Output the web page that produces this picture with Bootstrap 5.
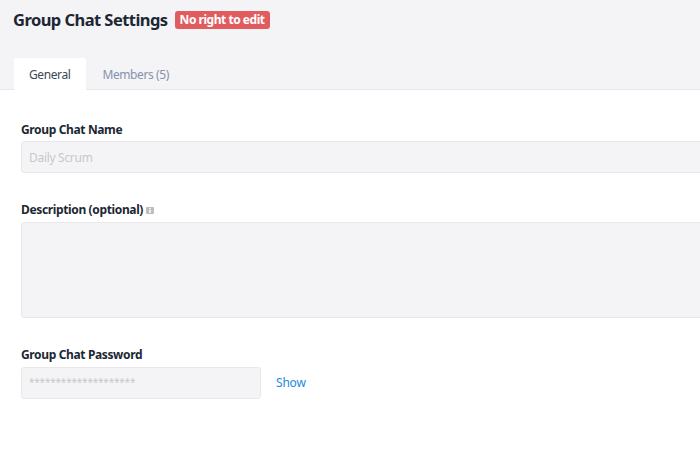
<!DOCTYPE html>
<html lang="en">
<head>
<meta charset="utf-8">
<title>Group Chat Settings</title>
<link href="https://cdn.jsdelivr.net/npm/bootstrap@5.3.0/dist/css/bootstrap.min.css" rel="stylesheet">
<style>
html, body { height: 100%; }
body { font-family: "Noto Sans", "Open Sans", sans-serif; font-size: 12px; color: #1c2733; background: #fff; overflow: hidden; width: 700px; }
.head-zone { background: #f4f4f7; height: 90px; padding: 8px 0 0 13px; display: flex; flex-direction: column; justify-content: space-between; border-bottom: 1px solid #e6e6e8; }
.page-title { font-size: 16.5px; font-weight: 700; margin: 0; color: #1c2733; line-height: 24px; letter-spacing: -0.55px; }
.edit-flag { background: #e05c5f; color: #fff; font-size: 12px; font-weight: 700; border-radius: 3px; padding: 0 5px; line-height: 18px; letter-spacing: -0.47px; margin-left: -1px; }
.head-zone .nav-tabs { border-bottom: 0; margin-bottom: -1px; gap: 1px; margin-left: 1px; }
.head-zone .nav-link { border: 0; margin-bottom: 0; border-radius: 3px 3px 0 0; padding: 0 15px; line-height: 34px; height: 32px; font-size: 12px; color: #8492ab; letter-spacing: -0.4px; }
.head-zone .nav-link.active { color: #3d4854; background: #fff; padding-right: 16px; }
.form-zone { padding: 31px 0 0 21px; width: 760px; }
.field-block { margin-bottom: 28px; }
.field-name { display: block; font-weight: 700; font-size: 12px; line-height: 18px; margin-bottom: 3px; letter-spacing: -0.36px; color: #1c2733; }
.field-block:first-child .field-name { margin-bottom: 2px; }
.form-zone .form-control { background: #f4f4f7; border: 1px solid #e8e8ea; border-radius: 3px; color: #c8c8c8; font-size: 12px; padding: 0 7px; height: 32px; letter-spacing: -0.3px; box-shadow: none; opacity: 1; }
.form-zone textarea.form-control { height: 96px; resize: none; }
.form-zone .pass-box { width: 240px; flex: none; font-size: 10px; letter-spacing: -0.2px; padding-bottom: 3px; }
.show-link { color: #1a8ae0; font-size: 12px; text-decoration: none; letter-spacing: -0.2px; margin-left: -1px; }
.info-mark { width: 8px; height: 7px; margin-left: 3px; vertical-align: 0; }
</style>
</head>
<body>
<div class="head-zone">
  <div class="d-flex align-items-center gap-2">
    <h1 class="page-title">Group Chat Settings</h1>
    <span class="edit-flag">No right to edit</span>
  </div>
  <ul class="nav nav-tabs">
    <li class="nav-item"><a class="nav-link active" href="#">General</a></li>
    <li class="nav-item"><a class="nav-link" href="#">Members (5)</a></li>
  </ul>
</div>
<form class="form-zone">
  <div class="field-block">
    <label class="field-name">Group Chat Name</label>
    <input class="form-control" type="text" value="Daily Scrum" disabled>
  </div>
  <div class="field-block">
    <label class="field-name">Description (optional)<svg class="info-mark" viewBox="0 0 8 7"><rect width="8" height="7" rx="1" fill="#bdbdbd"/><rect x="3.2" y="2.8" width="1.6" height="3" fill="#fff"/><rect x="3.2" y="1.1" width="1.6" height="1" fill="#fff"/></svg></label>
    <textarea class="form-control" disabled></textarea>
  </div>
  <div class="field-block">
    <label class="field-name">Group Chat Password</label>
    <div class="d-flex align-items-center gap-3">
      <input class="form-control pass-box" type="text" value="********************" disabled>
      <a class="show-link" href="#">Show</a>
    </div>
  </div>
</form>
<script src="https://cdn.jsdelivr.net/npm/bootstrap@5.3.0/dist/js/bootstrap.bundle.min.js"></script>
</body>
</html>
